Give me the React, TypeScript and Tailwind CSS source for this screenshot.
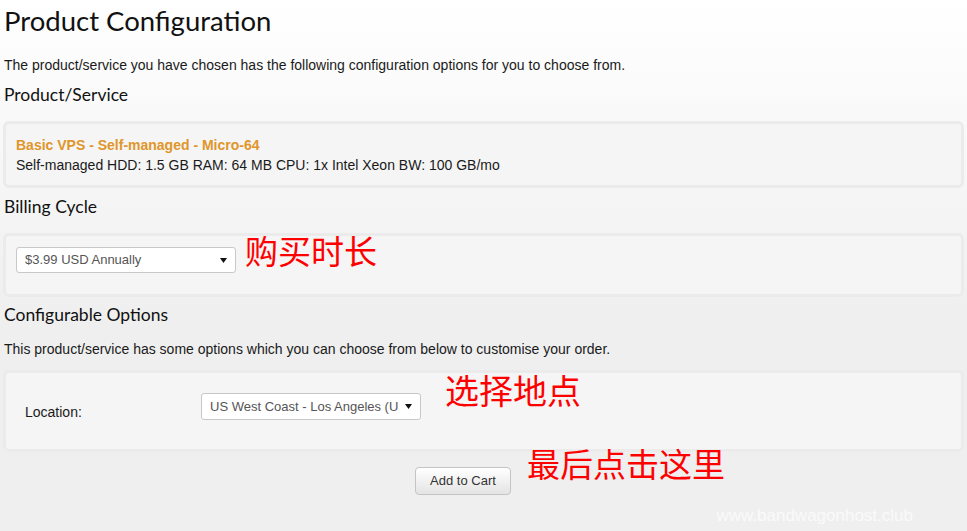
import React from "react";

function Caret() {
  return (
    <svg width="7" height="5" viewBox="0 0 7 5" className="shrink-0">
      <path d="M0 0H7L3.5 5Z" fill="#111" />
    </svg>
  );
}

function FakeSelect({ text, className }: { text: string; className: string }) {
  return (
    <div
      className={`flex items-center justify-between gap-[6px] rounded-[3px] border border-[#c8c8c8] bg-white pl-[8px] pr-[8px] font-['Liberation_Sans',Arial,sans-serif] text-[13px] text-[#555] ${className}`}
    >
      <span className="min-w-0 flex-1 overflow-hidden whitespace-nowrap">{text}</span>
      <Caret />
    </div>
  );
}

export default function App() {
  return (
    <div className="relative min-h-[531px] w-full overflow-hidden bg-gradient-to-b from-white to-[#efefef] to-[60%] px-[3px] font-['Liberation_Sans',Arial,sans-serif] text-[#1a1a1a]">
      <h1 className="pl-[1px] pt-[6px] font-['Lato','Open_Sans',sans-serif] text-[27.5px] leading-[30px] text-[#111]">
        Product Configuration
      </h1>
      <p className="mt-[20px] pl-[1px] text-[14px] leading-[18px]">
        The product/service you have chosen has the following configuration options for you to choose from.
      </p>
      <h2 className="mt-[10px] pl-[1px] font-['Lato','Open_Sans',sans-serif] text-[17.5px] leading-[22px] text-[#111]">
        Product/Service
      </h2>
      <div className="mt-[15px] rounded-[6px] border-[3px] border-[#ebebeb] bg-[#f5f5f5] px-[10px] pb-[11px] pt-[12px] text-[14px] leading-[18px]">
        <div className="font-bold text-[#e0962a]">Basic VPS - Self-managed - Micro-64</div>
        <div className="mt-[2px]">Self-managed HDD: 1.5 GB RAM: 64 MB CPU: 1x Intel Xeon BW: 100 GB/mo</div>
      </div>
      <h2 className="mt-[8px] pl-[1px] font-['Lato','Open_Sans',sans-serif] text-[17.5px] leading-[22px] text-[#111]">
        Billing Cycle
      </h2>
      <div className="relative mt-[15px] rounded-[6px] border-[3px] border-[#ebebeb] bg-[#f5f5f5] px-[10px] pb-[21px] pt-[11px]">
        <FakeSelect text="$3.99 USD Annually" className="h-[26px] w-[220px]" />
        <span className="absolute left-[239px] top-[-2px] font-['Noto_Sans_CJK_SC',sans-serif] text-[33px] leading-[33px] text-[#ff0000]">
          购买时长
        </span>
      </div>
      <h2 className="mt-[7px] pl-[1px] font-['Lato','Open_Sans',sans-serif] text-[17.5px] leading-[22px] text-[#111]">
        Configurable Options
      </h2>
      <p className="mt-[14px] pl-[1px] text-[14px] leading-[18px]">
        This product/service has some options which you can choose from below to customise your order.
      </p>
      <div className="relative mt-[12px] flex rounded-[6px] border-[3px] border-[#ebebeb] bg-[#f5f5f5] pb-[28px] pl-[19px] pt-[20px]">
        <div className="w-[176px] pt-[10px] text-[14px] leading-[18px]">Location:</div>
        <FakeSelect text="US West Coast - Los Angeles (USCA_2)" className="h-[27px] w-[220px]" />
        <span className="absolute left-[439px] top-[0px] font-['Noto_Sans_CJK_SC',sans-serif] text-[34px] leading-[34px] text-[#ff0000]">
          选择地点
        </span>
      </div>
      <div className="relative mt-[15px] flex">
        <button className="ml-[412px] h-[28px] w-[96px] rounded-[4px] border border-[#c4c4c4] bg-gradient-to-b from-white to-[#e4e4e4] text-[13px] text-[#333]">
          Add to Cart
        </button>
        <span className="absolute left-[524px] top-[-20px] font-['Noto_Sans_CJK_SC',sans-serif] text-[33px] leading-[33px] text-[#ff0000]">
          最后点击这里
        </span>
      </div>
      <div className="absolute bottom-[5px] right-[54px] text-[17px] leading-[20px] text-[#fafafa]">
        www.bandwagonhost.club
      </div>
    </div>
  );
}
